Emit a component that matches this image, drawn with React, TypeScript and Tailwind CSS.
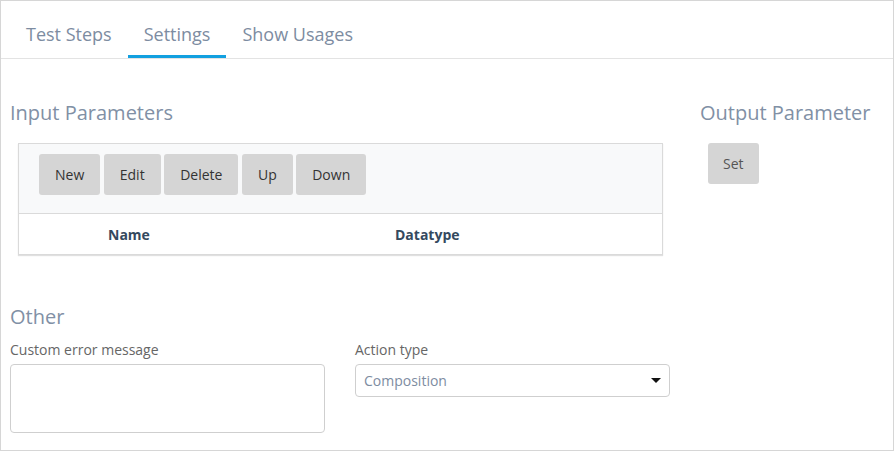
import React from "react";

const tabs = ["Test Steps", "Settings", "Show Usages"];
const toolbar = ["New", "Edit", "Delete", "Up", "Down"];

const Button: React.FC<{ label: string }> = ({ label }) => (
  <button className="h-[41px] px-4 rounded-[3px] bg-[#d5d5d5] text-[14px] text-[#333] leading-5">
    {label}
  </button>
);

const App: React.FC = () => {
  return (
    <div
      className="w-[894px] h-[451px] border border-[#d6d6d6] bg-white overflow-hidden"
      style={{ fontFamily: '"Open Sans", "Liberation Sans", sans-serif' }}
    >
      <nav className="flex h-[58px] border-b border-[#e3e3e3] pl-[9px]">
        {tabs.map((t) => (
          <div
            key={t}
            className={`px-4 pt-[21px] text-[18px] leading-6 text-[#7d8ca1] border-b-[3px] ${
              t === "Settings" ? "border-[#12a0e0]" : "border-transparent"
            }`}
          >
            {t}
          </div>
        ))}
      </nav>

      <div className="flex pl-[9px]">
        <section className="w-[653px]">
          <h2 className="mt-[40px] text-[20px] leading-7 text-[#8190a5]">Input Parameters</h2>
          <div className="ml-2 mt-[16px] border border-[#dadada] shadow-[0_1px_1px_rgba(0,0,0,0.12)]">
            <div className="flex gap-[3.5px] bg-[#f8f9fa] pl-5 pt-[10px] pb-[18px] border-b border-[#dadada]">
              {toolbar.map((b) => (
                <Button key={b} label={b} />
              ))}
            </div>
            <div className="flex h-[40px] items-center text-[14px] font-bold text-[#34495e]">
              <div className="w-[376px] pl-[89px]">Name</div>
              <div>Datatype</div>
            </div>
          </div>
        </section>
        <section className="ml-[37px]">
          <h2 className="mt-[40px] text-[20px] leading-7 text-[#8190a5]">Output Parameter</h2>
          <div className="ml-2 mt-[16px]">
            <button className="h-[41px] px-[15px] rounded-[3px] bg-[#d5d5d5] text-[14px] text-[#555] leading-5">
              Set
            </button>
          </div>
        </section>
      </div>

      <div className="pl-[9px]">
        <h2 className="mt-[48px] text-[20px] leading-7 text-[#8190a5]">Other</h2>
        <div className="flex gap-[30px] mt-[9px]">
          <div className="w-[315px]">
            <label className="block text-[14px] leading-5 text-[#666]">Custom error message</label>
            <div className="mt-[4px] h-[69px] rounded-[4px] border border-[#cfcfcf]" />
          </div>
          <div className="w-[315px]">
            <label className="block text-[14px] leading-5 text-[#666]">Action type</label>
            <div className="mt-[4px] h-[33px] flex items-center justify-between rounded-[4px] border border-[#cfcfcf] pl-2 pr-[8px]">
              <span className="text-[14px] text-[#7d8ca1]">Composition</span>
              <svg width="10" height="6" viewBox="0 0 10 6">
                <path d="M0 0 L10 0 L5 5 Z" fill="#111" />
              </svg>
            </div>
          </div>
        </div>
      </div>
    </div>
  );
};

export default App;
